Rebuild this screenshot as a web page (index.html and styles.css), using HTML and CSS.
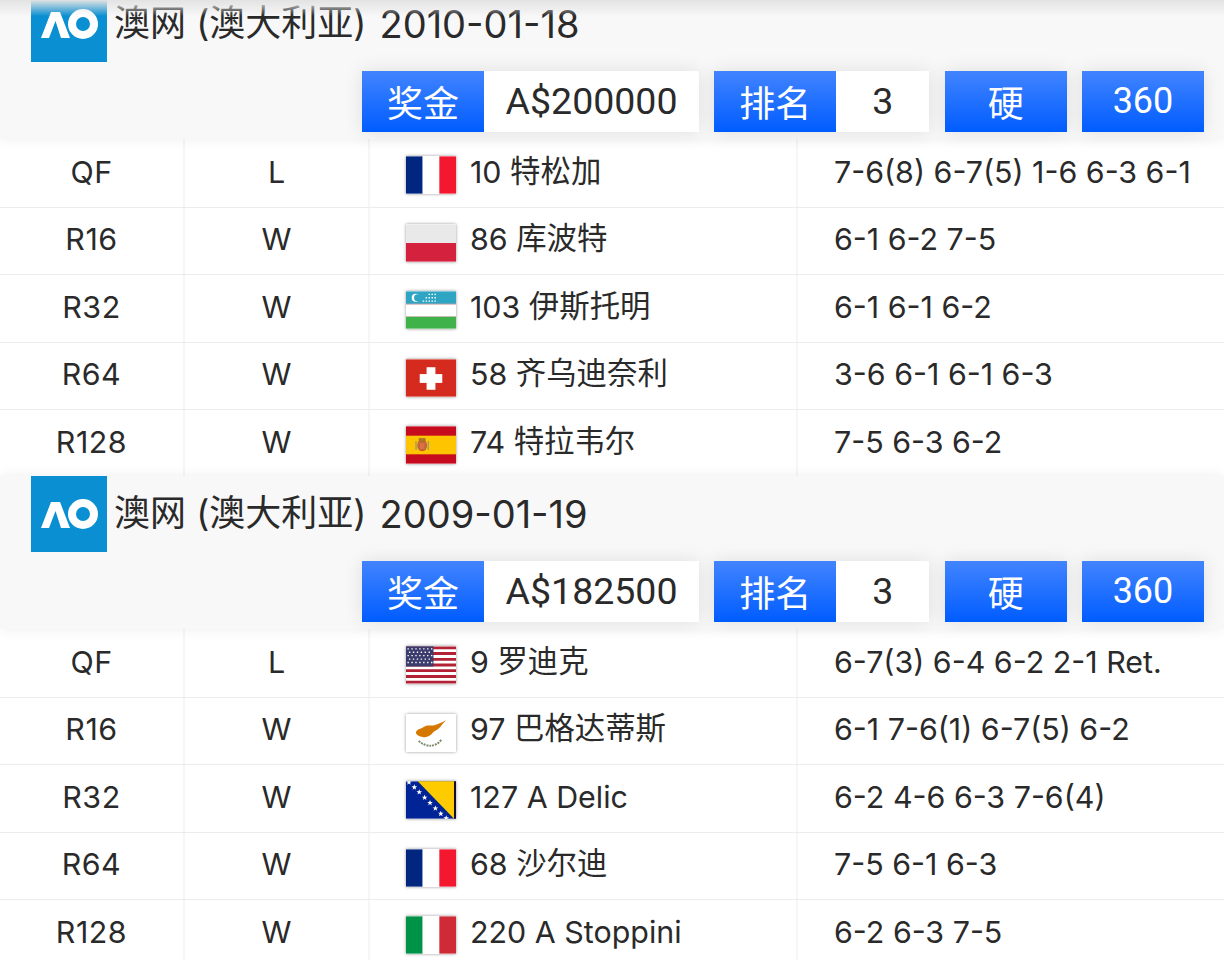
FILE: index.html
```html
<!DOCTYPE html>
<html lang="zh">
<head>
<meta charset="utf-8">
<title>澳网</title>
<link rel="stylesheet" href="styles.css">
</head>
<body>
<main class="page">
<section class="event">
  <header class="head">
    <div class="title-row">
      <svg class="logo" viewBox="0 0 76 76"><rect width="76" height="76" fill="#0a90d2"/><path d="M10 52L20 26H29L39 52H30L24.5 35L18 52Z" fill="#fff"/><circle cx="52" cy="38" r="11" fill="none" stroke="#fff" stroke-width="8"/></svg>
      <h2 class="title">澳网 (澳大利亚) <span class="date">2010-01-18</span></h2>
    </div>
    <div class="tags">
      <div class="tag"><span class="key">奖金</span><span class="val val-wide">A$200000</span></div>
      <div class="tag"><span class="key">排名</span><span class="val">3</span></div>
      <div class="tag"><span class="key">硬</span></div>
      <div class="tag"><span class="key">360</span></div>
    </div>
  </header>
  <div class="rows">
    <div class="row"><div class="cell round">QF</div><div class="cell">L</div><div class="cell opp">
      <svg class="flag" viewBox="0 0 51 38"><rect width="17" height="38" fill="#00267f"/><rect x="17" width="17" height="38" fill="#fff"/><rect x="34" width="17" height="38" fill="#f31830"/></svg><span>10 <span class="cn">特松加</span></span></div><div class="cell score">7-6(8) 6-7(5) 1-6 6-3 6-1</div></div>
    <div class="row"><div class="cell round">R16</div><div class="cell">W</div><div class="cell opp">
      <svg class="flag" viewBox="0 0 51 38"><rect width="51" height="19" fill="#e9e9e9"/><rect y="19" width="51" height="19" fill="#d4213d"/></svg><span>86 <span class="cn">库波特</span></span></div><div class="cell score">6-1 6-2 7-5</div></div>
    <div class="row"><div class="cell round">R32</div><div class="cell">W</div><div class="cell opp">
      <svg class="flag" viewBox="0 0 51 38"><rect width="51" height="13" fill="#2fa5c4"/><rect y="13" width="51" height="13" fill="#fff"/><rect y="12.500" width="51" height="1" fill="#c8a0a0"/><rect y="25.500" width="51" height="1" fill="#c8a0a0"/><rect y="26" width="51" height="12" fill="#3fb34a"/><circle cx="10" cy="6.500" r="4.200" fill="#fff"/><circle cx="11.800" cy="6.500" r="3.600" fill="#2fa5c4"/><path d="M17 10h1.500M20 10h1.500M23 10h1.500M26 10h1.500M29 10h1.500M20 6.500h1.500M23 6.500h1.500M26 6.500h1.500M29 6.500h1.500M23 3h1.500M26 3h1.500M29 3h1.500" stroke="#fff" stroke-width="1.400"/></svg><span>103 <span class="cn">伊斯托明</span></span></div><div class="cell score">6-1 6-1 6-2</div></div>
    <div class="row"><div class="cell round">R64</div><div class="cell">W</div><div class="cell opp">
      <svg class="flag" viewBox="0 0 51 38"><rect width="51" height="38" fill="#d52b1e"/><rect x="21" y="8" width="9" height="23" fill="#fff"/><rect x="14" y="15" width="23" height="9" fill="#fff"/></svg><span>58 <span class="cn">齐乌迪奈利</span></span></div><div class="cell score">3-6 6-1 6-1 6-3</div></div>
    <div class="row"><div class="cell round">R128</div><div class="cell">W</div><div class="cell opp">
      <svg class="flag" viewBox="0 0 51 38"><rect width="51" height="38" fill="#c60b1e"/><rect y="9.500" width="51" height="19" fill="#ffc400"/><ellipse cx="16.500" cy="19.500" rx="5" ry="6" fill="#c2662e"/><rect x="13" y="12" width="7" height="3" fill="#a8762a"/><rect x="14" y="17" width="5" height="6" fill="#d9704a"/><rect x="9.500" y="15" width="1.500" height="9" fill="#a89a70"/><rect x="22" y="15" width="1.500" height="9" fill="#a89a70"/></svg><span>74 <span class="cn">特拉韦尔</span></span></div><div class="cell score">7-5 6-3 6-2</div></div>
  </div>
</section>
<section class="event">
  <header class="head">
    <div class="title-row">
      <svg class="logo" viewBox="0 0 76 76"><rect width="76" height="76" fill="#0a90d2"/><path d="M10 52L20 26H29L39 52H30L24.5 35L18 52Z" fill="#fff"/><circle cx="52" cy="38" r="11" fill="none" stroke="#fff" stroke-width="8"/></svg>
      <h2 class="title">澳网 (澳大利亚) <span class="date">2009-01-19</span></h2>
    </div>
    <div class="tags">
      <div class="tag"><span class="key">奖金</span><span class="val val-wide">A$182500</span></div>
      <div class="tag"><span class="key">排名</span><span class="val">3</span></div>
      <div class="tag"><span class="key">硬</span></div>
      <div class="tag"><span class="key">360</span></div>
    </div>
  </header>
  <div class="rows">
    <div class="row"><div class="cell round">QF</div><div class="cell">L</div><div class="cell opp">
      <svg class="flag" viewBox="0 0 51 38"><rect width="51" height="38" fill="#fff"/><path d="M0 1.500H51M0 7.300H51M0 13.200H51M0 19H51M0 24.800H51M0 30.700H51M0 36.500H51" stroke="#b22234" stroke-width="2.900"/><rect width="28" height="20.500" fill="#3c3b6e"/><path d="M1.500 2.500h26M3 6h24M1.500 9.500h26M3 13h24M1.500 16.500h26" stroke="#fff" stroke-width="1.400" stroke-dasharray="1.400 2.600"/></svg><span>9 <span class="cn">罗迪克</span></span></div><div class="cell score">6-7(3) 6-4 6-2 2-1 Ret.</div></div>
    <div class="row"><div class="cell round">R16</div><div class="cell">W</div><div class="cell opp">
      <svg class="flag" viewBox="0 0 51 38"><rect width="51" height="38" fill="#fff"/><path d="M10 19C11 15 15 15 18 13C22 10 25 12 29 11C33 10 37 8 41 6L37 10C35 14 31 16 28 18C25 22 21 24 17 23C14 23 11 21 10 19Z" fill="#d57800"/><path d="M13 27C17 31 22 32 25 32C28 32 33 30 36 26" fill="none" stroke="#7a8a6a" stroke-width="2" stroke-dasharray="2 1"/></svg><span>97 <span class="cn">巴格达蒂斯</span></span></div><div class="cell score">6-1 7-6(1) 6-7(5) 6-2</div></div>
    <div class="row"><div class="cell round">R32</div><div class="cell">W</div><div class="cell opp">
      <svg class="flag" viewBox="0 0 51 38"><defs><path id="st" d="M0-3L.8-.9 2.900-.9 1.200.4 1.800 2.500 0 1.200-1.800 2.500-1.200.4-2.900-.9-.8-.9Z" fill="#fff"/></defs><rect width="51" height="38" fill="#002395"/><path d="M12 0H49V38Z" fill="#fecb00"/><rect x="49" width="2" height="38" fill="#11112a"/><use href="#st" x="3" y="1"/><use href="#st" x="8.500" y="6"/><use href="#st" x="13.500" y="11"/><use href="#st" x="19" y="16.500"/><use href="#st" x="24.500" y="22"/><use href="#st" x="30" y="27.500"/><use href="#st" x="35.500" y="33"/><use href="#st" x="41" y="37.500"/></svg><span>127 A Delic</span></div><div class="cell score">6-2 4-6 6-3 7-6(4)</div></div>
    <div class="row"><div class="cell round">R64</div><div class="cell">W</div><div class="cell opp">
      <svg class="flag" viewBox="0 0 51 38"><rect width="17" height="38" fill="#00267f"/><rect x="17" width="17" height="38" fill="#fff"/><rect x="34" width="17" height="38" fill="#f31830"/></svg><span>68 <span class="cn">沙尔迪</span></span></div><div class="cell score">7-5 6-1 6-3</div></div>
    <div class="row"><div class="cell round">R128</div><div class="cell">W</div><div class="cell opp">
      <svg class="flag" viewBox="0 0 51 38"><rect width="17" height="38" fill="#009246"/><rect x="17" width="17" height="38" fill="#fff"/><rect x="34" width="17" height="38" fill="#ce2b37"/></svg><span>220 A Stoppini</span></div><div class="cell score">6-2 6-3 7-5</div></div>
  </div>
</section>
</main>
</body>
</html>
```
FILE: styles.css
```css
* { box-sizing: border-box; }
html, body { margin: 0; padding: 0; height: 960px; overflow: hidden; background: #fff; }
body {
  font-family: Inter, "Noto Sans CJK SC", sans-serif;
  color: #2a2a2a;
}
body::before {
  content: "";
  position: fixed;
  left: 0; right: 0; top: 0;
  height: 16px;
  z-index: 5;
  background: linear-gradient(#e2e2e2, rgba(226,226,226,0));
}
.page { margin-top: -13.6px; }
.head {
  position: relative;
  z-index: 1;
  height: 153px;
  background: #f8f8f8;
  box-shadow: 0 0 12px rgba(0,0,0,.07);
}
.title-row { display: flex; align-items: flex-start; padding-left: 31px; }
.logo { width: 76px; height: 76px; display: block; flex: none; }
.title {
  margin: 0 0 0 7px;
  font-size: 36px;
  font-weight: 400;
  line-height: 75px;
  white-space: nowrap;
}
.date { font-size: 38px; line-height: 0; margin-left: 3px; vertical-align: -2px; }
.tags { display: flex; justify-content: flex-end; gap: 15.33px; padding: 9px 20px 0 0; }
.tag { display: flex; height: 61px; box-shadow: 0 0 18px rgba(0,0,0,.1); background: #fff; }
.key, .val {
  display: flex; align-items: center; justify-content: center;
  padding-bottom: 2px;
  font-family: Roboto, "Noto Sans CJK SC", sans-serif;
}
.key {
  width: 122px;
  background: linear-gradient(#4284ff, #005cff);
  color: #fff;
  font-size: 36px;
}
.val { width: 93px; font-size: 37.5px; }
.val-wide { width: 215px; }
.row {
  display: grid;
  grid-template-columns: 185px 185px 428px 1fr;
  height: 67.4px;
}
.row + .row { border-top: 1px solid #ececec; }
.cell {
  display: flex; align-items: center; justify-content: center;
  padding-bottom: 3px;
  font-size: 30.4px;
  line-height: 40px;
  border-right: 2px solid #f6f6f6;
  white-space: nowrap;
}
.round { letter-spacing: .5px; }
.opp { justify-content: flex-start; padding-left: 36px; gap: 14px; }
.cn { line-height: 0; vertical-align: 1px; }
.score { justify-content: flex-start; padding-left: 36px; border-right: 0; }
.flag { width: 50px; height: 38px; margin-top: 7px; flex: none; display: block; box-shadow: 0 0 3px rgba(0,0,0,.4); }
```
